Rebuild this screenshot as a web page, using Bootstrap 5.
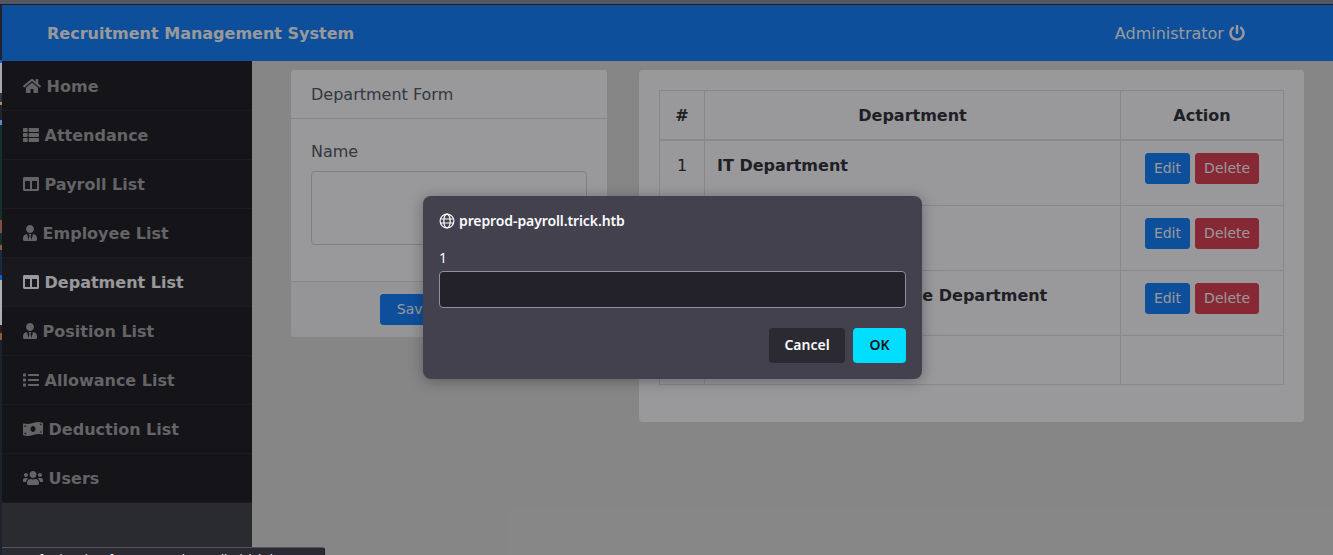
<!DOCTYPE html>
<html lang="en">
<head>
    <meta charset="UTF-8">
    <meta name="viewport" content="width=device-width, initial-scale=1.0">
    <title>Recruitment Management System</title>
    <link href="https://cdn.jsdelivr.net/npm/bootstrap@5.3.0/dist/css/bootstrap.min.css" rel="stylesheet">
    <style>
        html, body { height: 100%; overflow: hidden; }
        body {
            font-family: "DejaVu Sans", sans-serif;
            font-size: 16px;
            color: #212529;
            background: #1c1b22;
        }
        .chrome-top { height: 5px; background: #55555f; border-bottom: 1px solid #1f1e26; }
        .shell { height: 550px; }
        /* bits of the desktop showing left of the browser window */
        .desk-edge {
            width: 2px;
            flex: none;
            background: linear-gradient(#23222b 0 55px, #0d5ed0 55px 58px, #a8a8a8 58px 88px, #2b3a4a 88px 97px, #a89060 97px 100px, #20242c 100px 115px, #5a8ac0 115px 120px, #16302c 120px 215px, #805040 215px 228px, #16302c 228px 240px, #905c38 240px 245px, #1a2a40 245px 270px, #0d5ed0 270px 275px, #b0b0b0 275px 320px, #23222b 320px 328px, #905c38 328px 335px, #1c2230 335px);
        }
        .page { position: relative; min-width: 0; background: #dedfda; }
        .top-bar { height: 56px; padding: 2px 88px 0 45px; background: #007bff; color: #fff; }
        .top-bar .brand-name { font-weight: 700; }
        .glyph { height: 1em; width: auto; fill: currentColor; vertical-align: -0.125em; }
        .side-menu { width: 250px; flex: none; background: #353a3b; }
        .side-menu a {
            display: block;
            padding: 13px 21px 0;
            height: 49px;
            font-weight: 700;
            color: #9e9e9e;
            text-decoration: none;
            background: #0f1013;
            border-bottom: 1px solid #1b1c20;
        }
        .side-menu a:first-child { height: 50px; padding-top: 14px; }
        .side-menu a.is-current { color: #fff; background: #17181b; }
        .content-area { padding: 9px 29px 0 39px; gap: 32px; }
        .form-col { width: 316px; flex: none; }
        .page .card { border: 0; border-radius: 4px; }
        .page .card-header { padding: 13px 20px 0; height: 49px; border-radius: 4px 4px 0 0; background: #fff; border-bottom: 1px solid #dfdfdf; color: #495057; }
        .page .card-body { padding: 20px; }
        .page .card-footer { padding: 12px 20px; background: #f7f7f7; border-top: 1px solid #dfdfdf; }
        .page .form-label { margin-bottom: 7px; padding-top: 1px; color: #495057; }
        .page textarea.form-control { height: 74px; border-radius: 4px; border-color: #ced4da; resize: none; }
        .page .btn-sm { height: 31px; font-size: 14px; padding: 4px 8px; border-radius: 3px; line-height: 21px; }
        .page .btn-primary { background: #007bff; border-color: #007bff; }
        .page .btn-danger { background: #dc3545; border-color: #dc3545; }
        .page .form-actions .btn { width: 68px; }
        .page .form-actions .btn-light { width: 66px; }
        .dept-table { table-layout: fixed; margin-bottom: 17px; border-color: #dee2e6; }
        .dept-table th, .dept-table td { padding: 13px 12px 11px; }
        .dept-table td.row-actions { padding: 12px; }
        .dept-table thead th { border-bottom-width: 2px; height: 49px; }
        .dept-table p { margin-bottom: 16px; font-weight: 700; }
        .col-num { width: 45px; }
        .col-action { width: 163px; }
        .dim-layer { position: absolute; inset: 0; background: rgba(28, 27, 34, 0.45); }
        .prompt-box {
            position: absolute;
            left: 421px;
            top: 191px;
            width: 499px;
            height: 183px;
            padding: 16px;
            border-radius: 8px;
            background: #42414d;
            color: #fbfbfe;
            font-family: "Noto Sans", sans-serif;
            box-shadow: 0 2px 14px rgba(15, 15, 20, 0.35);
        }
        .prompt-title { font-size: 14px; font-weight: 600; height: 18px; line-height: 18px; letter-spacing: -0.1px; }
        .prompt-label { font-size: 14px; margin-top: 18px; height: 23px; line-height: 19px; }
        .prompt-input { height: 37px; border: 1px solid #8f8f9d; border-radius: 4px; background: #23222b; }
        .prompt-actions { margin-top: 20px; gap: 8px; }
        .prompt-btn { height: 35px; border: 0; border-radius: 4px; font-size: 14px; font-weight: 600; background: #2b2a33; color: #fbfbfe; padding: 0 0 2px; }
        .btn-cancel { width: 76px; }
        .btn-ok { width: 53px; background: #00ddff; color: #15141a; }
        .status-panel {
            position: absolute;
            left: 0;
            top: 542px;
            width: 323px;
            height: 8px;
            overflow: hidden;
            padding: 4px 0 0 6px;
            background: #2b2a33;
            border-top: 1px solid #55545e;
            border-right: 1px solid #1c1b22;
            border-top-right-radius: 3px;
            color: #fbfbfe;
            font-family: "Noto Sans", sans-serif;
            font-size: 12px;
            line-height: 16px;
            white-space: nowrap;
        }
    </style>
</head>
<body>

<svg width="0" height="0" class="position-absolute">
    <symbol id="i-home" viewBox="0 0 576 512"><path d="M280.37 148.26L96 300.11V464a16 16 0 0 0 16 16l112.06-.29a16 16 0 0 0 15.92-16V368a16 16 0 0 1 16-16h64a16 16 0 0 1 16 16v95.64a16 16 0 0 0 16 16.05L464 480a16 16 0 0 0 16-16V300L295.67 148.26a12.19 12.19 0 0 0-15.3 0zM571.6 251.47L488 182.56V44.05a12 12 0 0 0-12-12h-56a12 12 0 0 0-12 12v72.61L318.47 43a48 48 0 0 0-61 0L4.34 251.47a12 12 0 0 0-1.6 16.9l25.5 31A12 12 0 0 0 45.15 301l235.22-193.74a12.19 12.19 0 0 1 15.3 0L530.9 301a12 12 0 0 0 16.9-1.6l25.5-31a12 12 0 0 0-1.7-16.93z"/></symbol>
    <symbol id="i-thlist" viewBox="0 0 512 512"><path d="M149.333 216v80c0 13.255-10.745 24-24 24H24c-13.255 0-24-10.745-24-24v-80c0-13.255 10.745-24 24-24h101.333c13.255 0 24 10.745 24 24zM0 376v80c0 13.255 10.745 24 24 24h101.333c13.255 0 24-10.745 24-24v-80c0-13.255-10.745-24-24-24H24c-13.255 0-24 10.745-24 24zM125.333 32H24C10.745 32 0 42.745 0 56v80c0 13.255 10.745 24 24 24h101.333c13.255 0 24-10.745 24-24V56c0-13.255-10.745-24-24-24zm80 448H488c13.255 0 24-10.745 24-24v-80c0-13.255-10.745-24-24-24H205.333c-13.255 0-24 10.745-24 24v80c0 13.255 10.745 24 24 24zm-24-424v80c0 13.255 10.745 24 24 24H488c13.255 0 24-10.745 24-24V56c0-13.255-10.745-24-24-24H205.333c-13.255 0-24 10.745-24 24zm24 264H488c13.255 0 24-10.745 24-24v-80c0-13.255-10.745-24-24-24H205.333c-13.255 0-24 10.745-24 24v80c0 13.255 10.745 24 24 24z"/></symbol>
    <symbol id="i-columns" viewBox="0 0 512 512"><path d="M464 32H48C21.49 32 0 53.49 0 80v352c0 26.51 21.49 48 48 48h416c26.51 0 48-21.49 48-48V80c0-26.51-21.49-48-48-48zM224 416H64V160h160v256zm224 0H288V160h160v256z"/></symbol>
    <symbol id="i-usertie" viewBox="0 0 448 512"><path d="M224 256c70.7 0 128-57.3 128-128S294.7 0 224 0 96 57.3 96 128s57.3 128 128 128zm95.8 32.6L272 480l-32-136 32-56h-96l32 56-32 136-47.8-191.4C56.9 292 0 350.3 0 422.4V464c0 26.5 21.5 48 48 48h352c26.5 0 48-21.5 48-48v-41.6c0-72.1-56.9-130.4-128.2-133.8z"/></symbol>
    <symbol id="i-list" viewBox="0 0 512 512"><path d="M80 368H16a16 16 0 0 0-16 16v64a16 16 0 0 0 16 16h64a16 16 0 0 0 16-16v-64a16 16 0 0 0-16-16zm0-320H16A16 16 0 0 0 0 64v64a16 16 0 0 0 16 16h64a16 16 0 0 0 16-16V64a16 16 0 0 0-16-16zm0 160H16a16 16 0 0 0-16 16v64a16 16 0 0 0 16 16h64a16 16 0 0 0 16-16v-64a16 16 0 0 0-16-16zm416 176H176a16 16 0 0 0-16 16v32a16 16 0 0 0 16 16h320a16 16 0 0 0 16-16v-32a16 16 0 0 0-16-16zm0-320H176a16 16 0 0 0-16 16v32a16 16 0 0 0 16 16h320a16 16 0 0 0 16-16V80a16 16 0 0 0-16-16zm0 160H176a16 16 0 0 0-16 16v32a16 16 0 0 0 16 16h320a16 16 0 0 0 16-16v-32a16 16 0 0 0-16-16z"/></symbol>
    <symbol id="i-money" viewBox="0 0 640 512"><path d="M621.16 54.46C582.37 38.19 543.55 32 504.75 32c-123.17-.01-246.33 62.34-369.5 62.34-30.89 0-61.76-3.92-92.65-13.72-3.47-1.1-6.95-1.62-10.35-1.62C15.04 79 0 92.32 0 110.81v317.26c0 12.63 7.23 24.6 18.84 29.46C57.63 473.81 96.45 480 135.25 480c123.17 0 246.34-62.35 369.51-62.35 30.89 0 61.76 3.92 92.65 13.72 3.47 1.1 6.95 1.62 10.35 1.62 17.21 0 32.25-13.32 32.25-31.81V83.93c-.01-12.64-7.24-24.6-18.85-29.47zM48 132.22c20.12 5.04 41.12 7.57 62.72 8.93C104.84 170.54 79 192.69 48 192.69v-60.47zm0 285v-47.78c34.37 0 62.18 27.27 63.71 61.4-22.53-1.81-43.59-6.31-63.71-13.62zM320 352c-44.19 0-80-42.99-80-96 0-53.02 35.82-96 80-96s80 42.98 80 96c0 53.03-35.83 96-80 96zm272 27.78c-17.52-4.39-35.71-6.85-54.32-8.44 5.87-26.08 27.5-45.88 54.32-49.28v57.72zm0-236.11c-30.89-3.91-54.86-29.7-55.81-61.55 19.54 2.17 38.09 6.23 55.81 12.66v48.89z"/></symbol>
    <symbol id="i-users" viewBox="0 0 640 512"><path d="M96 224c35.3 0 64-28.7 64-64s-28.7-64-64-64-64 28.7-64 64 28.7 64 64 64zm448 0c35.3 0 64-28.7 64-64s-28.7-64-64-64-64 28.7-64 64 28.7 64 64 64zm32 32h-64c-17.6 0-33.5 7.1-45.1 18.6 40.3 22.1 68.9 62 75.1 109.4h66c17.7 0 32-14.3 32-32v-32c0-35.3-28.7-64-64-64zm-256 0c61.9 0 112-50.1 112-112S381.9 32 320 32 208 82.1 208 144s50.1 112 112 112zm76.8 32h-8.3c-20.8 10-43.9 16-68.5 16s-47.6-6-68.5-16h-8.3C179.6 288 128 339.6 128 403.2V432c0 26.5 21.5 48 48 48h288c26.5 0 48-21.5 48-48v-28.8c0-63.6-51.6-115.2-115.2-115.2zm-223.7-13.4C161.5 263.1 145.6 256 128 256H64c-35.3 0-64 28.7-64 64v32c0 17.7 14.3 32 32 32h65.9c6.3-47.4 34.9-87.3 75.2-109.4z"/></symbol>
    <symbol id="i-power" viewBox="0 0 512 512"><path d="M400 54.1c63 45 104 118.6 104 201.9 0 136.8-110.8 247.7-247.5 248C120 504.3 8.2 393 8 256.4 7.9 173.1 48.9 99.3 111.8 54.2c11.7-8.3 28-4.8 35 7.7L162.6 90c5.9 10.5 3.1 23.8-6.6 31-41.5 30.8-68 79.6-68 134.9-.1 92.3 74.5 168.1 168 168.1 91.6 0 168.6-74.2 168-169.1-.3-51.8-24.7-101.8-68.1-134-9.7-7.2-12.4-20.5-6.5-30.9l15.8-28.1c7-12.4 23.2-16.1 34.8-7.8zM296 264V24c0-13.3-10.7-24-24-24h-32c-13.3 0-24 10.7-24 24v240c0 13.3 10.7 24 24 24h32c13.3 0 24-10.7 24-24z"/></symbol>
</svg>

<div class="chrome-top"></div>

<div class="shell d-flex">
    <div class="desk-edge"></div>

    <div class="page flex-fill d-flex flex-column">
        <!-- Top bar -->
        <nav class="top-bar d-flex align-items-center justify-content-between flex-none">
            <span class="brand-name">Recruitment Management System</span>
            <span>Administrator <svg class="glyph" viewBox="0 0 512 512"><use href="#i-power"/></svg></span>
        </nav>

        <div class="d-flex flex-fill">
            <!-- Sidebar -->
            <div class="side-menu">
                <a href="#"><svg class="glyph" viewBox="0 0 576 512"><use href="#i-home"/></svg> Home</a>
                <a href="#"><svg class="glyph" viewBox="0 0 512 512"><use href="#i-thlist"/></svg> Attendance</a>
                <a href="#"><svg class="glyph" viewBox="0 0 512 512"><use href="#i-columns"/></svg> Payroll List</a>
                <a href="#"><svg class="glyph" viewBox="0 0 448 512"><use href="#i-usertie"/></svg> Employee List</a>
                <a href="#" class="is-current"><svg class="glyph" viewBox="0 0 512 512"><use href="#i-columns"/></svg> Depatment List</a>
                <a href="#"><svg class="glyph" viewBox="0 0 448 512"><use href="#i-usertie"/></svg> Position List</a>
                <a href="#"><svg class="glyph" viewBox="0 0 512 512"><use href="#i-list"/></svg> Allowance List</a>
                <a href="#"><svg class="glyph" viewBox="0 0 640 512"><use href="#i-money"/></svg> Deduction List</a>
                <a href="#"><svg class="glyph" viewBox="0 0 640 512"><use href="#i-users"/></svg> Users</a>
            </div>

            <!-- Main content -->
            <div class="content-area d-flex flex-fill align-items-start">
                <div class="form-col">
                    <div class="card">
                        <div class="card-header">Department Form</div>
                        <div class="card-body">
                            <label class="form-label">Name</label>
                            <textarea class="form-control mb-3"></textarea>
                        </div>
                        <div class="card-footer form-actions d-flex justify-content-center gap-1">
                            <button class="btn btn-sm btn-primary">Save</button>
                            <button class="btn btn-sm btn-light">Cancel</button>
                        </div>
                    </div>
                </div>

                <div class="flex-fill">
                    <div class="card">
                        <div class="card-body">
                            <table class="table table-bordered dept-table">
                                <thead>
                                    <tr>
                                        <th class="col-num text-center">#</th>
                                        <th class="text-center">Department</th>
                                        <th class="col-action text-center">Action</th>
                                    </tr>
                                </thead>
                                <tbody>
                                    <tr>
                                        <td class="text-center">1</td>
                                        <td><p>IT Department</p></td>
                                        <td class="text-center row-actions"><button class="btn btn-sm btn-primary">Edit</button> <button class="btn btn-sm btn-danger">Delete</button></td>
                                    </tr>
                                    <tr>
                                        <td class="text-center">2</td>
                                        <td><p>HR Department</p></td>
                                        <td class="text-center row-actions"><button class="btn btn-sm btn-primary">Edit</button> <button class="btn btn-sm btn-danger">Delete</button></td>
                                    </tr>
                                    <tr>
                                        <td class="text-center">3</td>
                                        <td><p>Accounting and Finance Department</p></td>
                                        <td class="text-center row-actions"><button class="btn btn-sm btn-primary">Edit</button> <button class="btn btn-sm btn-danger">Delete</button></td>
                                    </tr>
                                    <tr>
                                        <td class="text-center">4</td>
                                        <td></td>
                                        <td></td>
                                    </tr>
                                </tbody>
                            </table>
                        </div>
                    </div>
                </div>
            </div>
        </div>

        <!-- Dimmed page behind the browser prompt -->
        <div class="dim-layer"></div>

        <div class="prompt-box">
            <div class="prompt-title d-flex align-items-center gap-1">
                <svg width="16" height="16" viewBox="0 0 16 16" fill="none" stroke="#fbfbfe" stroke-width="1.2">
                    <circle cx="8" cy="8" r="6.9"/>
                    <ellipse cx="8" cy="8" rx="3.2" ry="6.9"/>
                    <path d="M1.2 6h13.6M1.2 10h13.6"/>
                </svg>
                <span>preprod-payroll.trick.htb</span>
            </div>
            <div class="prompt-label">1</div>
            <div class="prompt-input"></div>
            <div class="prompt-actions d-flex justify-content-end">
                <button class="prompt-btn btn-cancel">Cancel</button>
                <button class="prompt-btn btn-ok">OK</button>
            </div>
        </div>

        <div class="status-panel">Transferring data from preprod-payroll.trick.htb…</div>
    </div>
</div>

</body>
</html>
